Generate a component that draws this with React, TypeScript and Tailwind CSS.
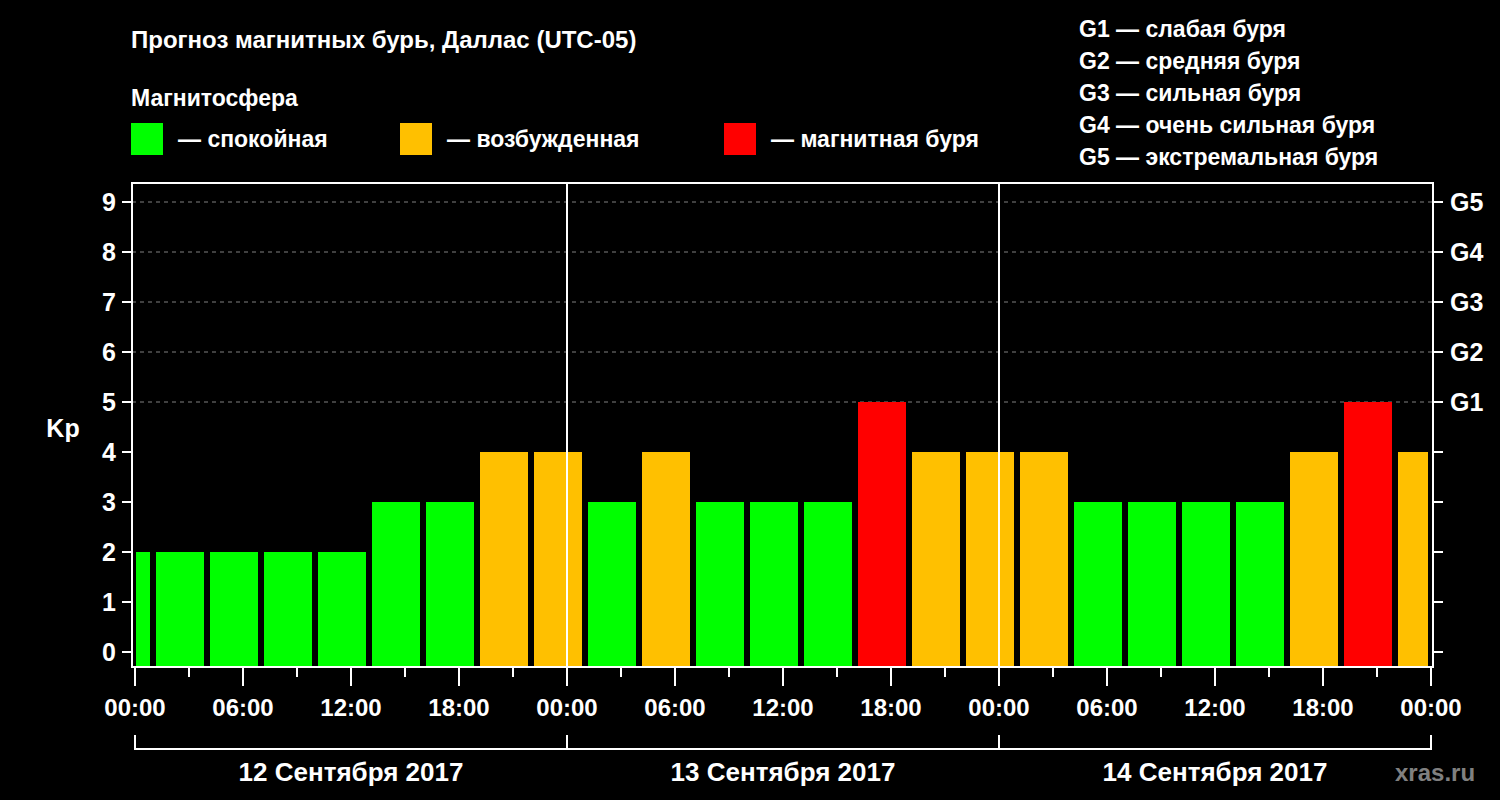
import React from "react";

const vals = [2,2,2,2,2,3,3,4,4,3,4,3,3,3,5,4,4,4,3,3,3,3,4,5,4];
const col = (v: number) => (v >= 5 ? "#ff0000" : v >= 4 ? "#ffc000" : "#00ff00");
const yOf = (k: number) => 652 - 50 * k;

export default function App() {
  const font = { fontFamily: '"Liberation Sans", Arial, sans-serif' };
  return (
    <div className="w-[1500px] h-[800px] bg-black text-white font-bold overflow-hidden" style={font}>
      <div className="flex h-[180px]">
        <div className="pl-[131px] pt-[22px] w-[1079px] flex flex-col">
          <div className="text-[24px] leading-[36px]">Прогноз магнитных бурь, Даллас (UTC-05)</div>
          <div className="text-[23px] leading-[32px] mt-[24px]">Магнитосфера</div>
          <div className="flex items-center mt-[8px] text-[23px]">
            <div className="w-[32px] h-[32px] bg-[#00ff00]" />
            <span className="ml-[15px] w-[222px]">— спокойная</span>
            <div className="w-[32px] h-[32px] bg-[#ffc000]" />
            <span className="ml-[15px] w-[277px]">— возбужденная</span>
            <div className="w-[32px] h-[32px] bg-[#ff0000]" />
            <span className="ml-[15px]">— магнитная буря</span>
          </div>
        </div>
        <div className="pt-[13px] flex flex-col text-[23px] leading-[32px]">
          <div>G1 — слабая буря</div>
          <div>G2 — средняя буря</div>
          <div>G3 — сильная буря</div>
          <div>G4 — очень сильная буря</div>
          <div>G5 — экстремальная буря</div>
        </div>
      </div>
      <svg width="1500" height="620" viewBox="0 180 1500 620" className="block">
        {[5,6,7,8,9].map(k => (
          <line key={k} x1={132} x2={1433} y1={yOf(k)} y2={yOf(k)} stroke="#808080" strokeWidth={1} strokeDasharray="4 4" />
        ))}
        {vals.map((v, i) => {
          const x0 = 102 + 54 * i;
          const x = Math.max(x0, 136);
          const x1 = Math.min(x0 + 48, 1428);
          return <rect key={i} x={x} y={yOf(v)} width={x1 - x} height={667 - yOf(v)} fill={col(v)} />;
        })}
        <rect x={132} y={183} width={1301} height={484} fill="none" stroke="#fff" strokeWidth={2} />
        <line x1={567} x2={567} y1={183} y2={667} stroke="#fff" strokeWidth={2} />
        <line x1={999} x2={999} y1={183} y2={667} stroke="#fff" strokeWidth={2} />
        {Array.from({ length: 10 }, (_, k) => (
          <g key={k}>
            <line x1={122} x2={132} y1={yOf(k)} y2={yOf(k)} stroke="#fff" strokeWidth={2} />
            <line x1={1433} x2={1443} y1={yOf(k)} y2={yOf(k)} stroke="#fff" strokeWidth={2} />
            <text x={116} y={yOf(k) + 9} textAnchor="end" fill="#fff" fontSize={25} fontWeight="bold">{k}</text>
            {k >= 5 && <text x={1450} y={yOf(k) + 9} fill="#fff" fontSize={25} fontWeight="bold">G{k - 4}</text>}
          </g>
        ))}
        <text x={63} y={437} textAnchor="middle" fill="#fff" fontSize={25} fontWeight="bold">Kp</text>
        {Array.from({ length: 25 }, (_, i) => {
          const x = 135 + 54 * i;
          const major = i % 2 === 0;
          return <line key={i} x1={x} x2={x} y1={667} y2={major ? 686 : 677} stroke="#fff" strokeWidth={2} />;
        })}
        {Array.from({ length: 13 }, (_, i) => (
          <text key={i} x={135 + 108 * i} y={716} textAnchor="middle" fill="#fff" fontSize={24} fontWeight="bold">
            {["00:00", "06:00", "12:00", "18:00"][i % 4]}
          </text>
        ))}
        <path d="M135 735 V749 H1431 V735 M567 735 V749 M999 735 V749" fill="none" stroke="#fff" strokeWidth={2} />
        {["12 Сентября 2017", "13 Сентября 2017", "14 Сентября 2017"].map((t, i) => (
          <text key={i} x={351 + 432 * i} y={781} textAnchor="middle" fill="#fff" fontSize={26} fontWeight="bold">{t}</text>
        ))}
        <text x={1395} y={781} fill="#808080" fontSize={24} fontWeight="bold">xras.ru</text>
      </svg>
    </div>
  );
}
